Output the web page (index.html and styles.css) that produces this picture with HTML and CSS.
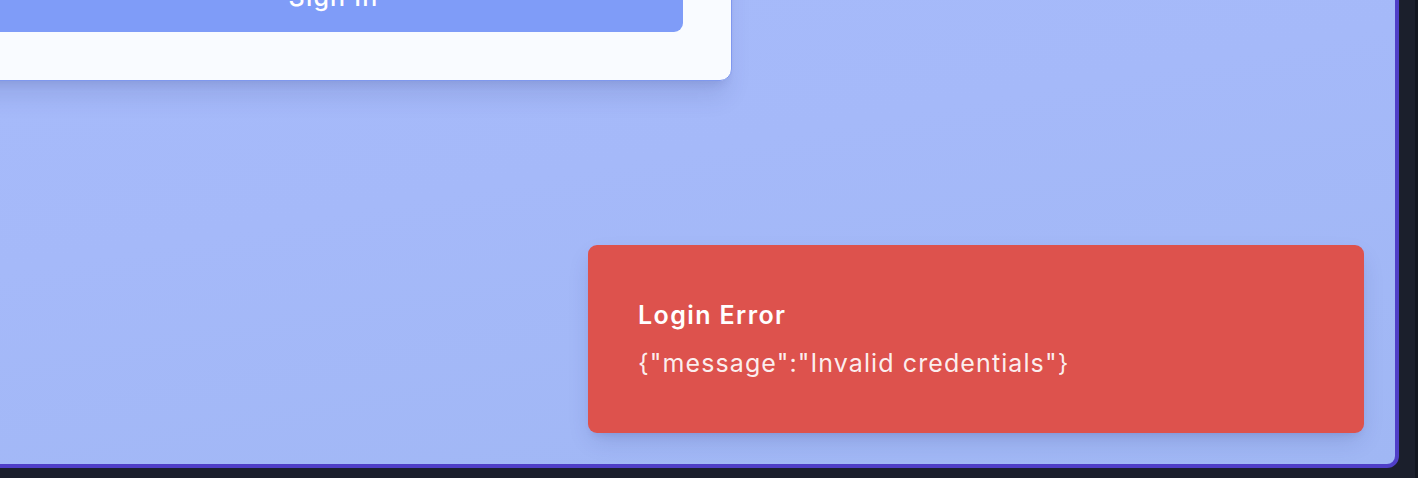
FILE: index.html
```html
<!DOCTYPE html>
<html lang="en">
<head>
<meta charset="utf-8">
<title>Login</title>
<link rel="stylesheet" href="styles.css">
</head>
<body>
<div class="stage">
  <div class="window">
    <div class="content">
      <div class="card">
        <button class="btn" type="button">Sign In</button>
      </div>
    </div>
    <div class="toast" role="alert">
      <div class="toast-title">Login Error</div>
      <div class="toast-msg">{"message":"Invalid credentials"}</div>
    </div>
  </div>
  <div class="gutter"></div>
  <div class="track"></div>
</div>
</body>
</html>
```
FILE: styles.css
```css
html, body {
  margin: 0;
  padding: 0;
  height: 100%;
  overflow: hidden;
  background: #1b1f2c;
  font-family: Inter, "Noto Sans", sans-serif;
}

.stage {
  display: flex;
  align-items: flex-end;
  height: 478px;
  overflow: hidden;
}

.window {
  position: relative;
  flex: none;
  box-sizing: border-box;
  width: 1519px;
  height: 540px;
  margin-left: -120px;
  margin-bottom: 10px;
  border: 4px solid #4f3ec7;
  border-radius: 12px;
  background: linear-gradient(170deg, #a7bbfb 0%, #a5b9f9 45%, #a0b7f4 100%);
  overflow: hidden;
}

.content {
  padding-left: 51px;
  padding-top: 0;
}

.card {
  box-sizing: border-box;
  width: 797px;
  height: 149px;
  padding: 0 48px 48px;
  display: flex;
  flex-direction: column;
  justify-content: flex-end;
  background: #f9fbff;
  border: 1px solid #7f98ee;
  border-radius: 12px;
  box-shadow: 0 20px 25px -5px rgba(30, 40, 110, 0.12), 0 8px 10px -6px rgba(30, 40, 110, 0.12);
}

.btn {
  display: block;
  width: 100%;
  height: 70px;
  border: 0;
  border-radius: 9px;
  background: #7f9cf8;
  color: #ffffff;
  font-family: Inter, "Noto Sans", sans-serif;
  font-size: 25px;
  font-weight: 500;
  line-height: 32px;
  letter-spacing: 1.2px;
}

.gutter {
  flex: none;
  width: 16px;
  height: 478px;
}

.track {
  flex: none;
  width: 3px;
  height: 478px;
  background: #121620;
}

.toast {
  position: absolute;
  right: 31px;
  bottom: 31px;
  box-sizing: border-box;
  width: 776px;
  height: 188px;
  padding: 54px 48px 0 50px;
  background: #dd524d;
  border-radius: 9px;
  box-shadow: 0 10px 25px -5px rgba(30, 40, 110, 0.18), 0 6px 10px -6px rgba(30, 40, 110, 0.15);
  color: #ffffff;
}

.toast-title {
  font-size: 25px;
  font-weight: 600;
  line-height: 32px;
  letter-spacing: 1.4px;
}

.toast-msg {
  margin-top: 16px;
  font-size: 25px;
  font-weight: 400;
  line-height: 32px;
  letter-spacing: 1.1px;
  color: rgba(255, 255, 255, 0.92);
}
```
